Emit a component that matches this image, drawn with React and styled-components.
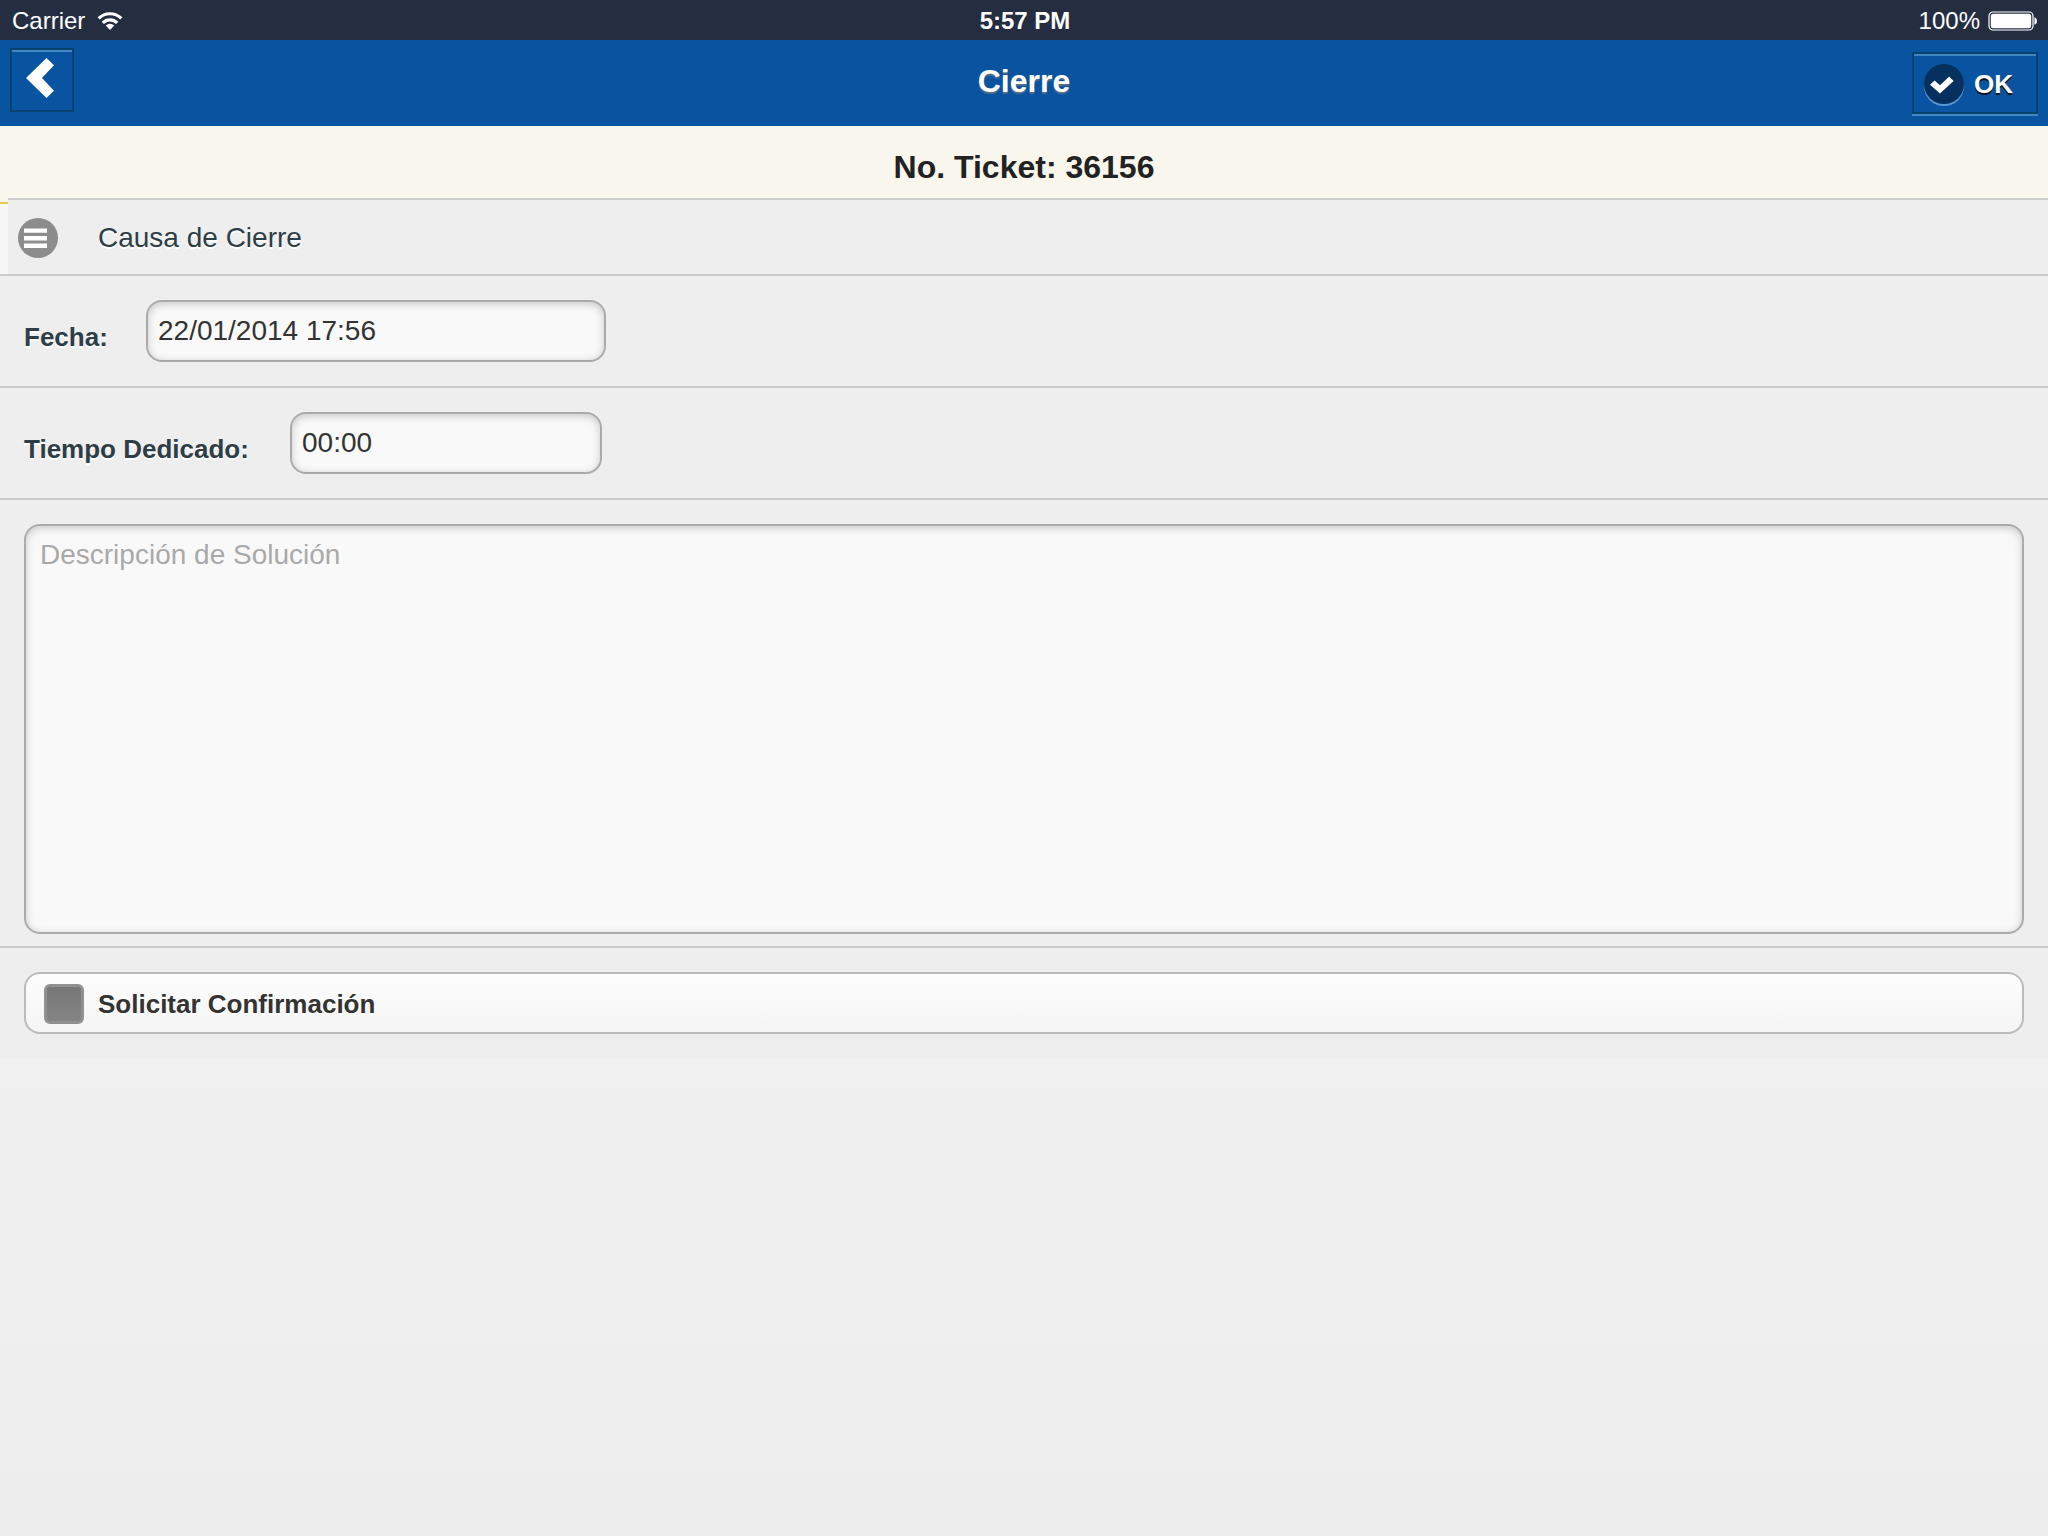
import React, { useState } from 'react';
import styled, { createGlobalStyle, css } from 'styled-components';

const GlobalStyle = createGlobalStyle`
	*, *::before, *::after {
		box-sizing: border-box;
	}

	body {
		margin: 0;
		font-family: 'Liberation Sans', Arial, sans-serif;
		color: #333;
	}

	button, input, textarea {
		margin: 0;
		font-family: inherit;
	}
`;

const StyledPage = styled.div`
	min-height: 100vh;
	background: linear-gradient(#f9f9f9, #ededed);
`;

const StyledStatusBar = styled.div`
	height: 40px;
	padding: 0 10px 0 12px;
	display: grid;
	grid-template-columns: 1fr auto 1fr;
	align-items: center;
	background-color: #252e41;
	color: #fff;
	font-size: 24px;
	line-height: 42px;
`;

const StyledStatusSide = styled.div`
	display: flex;
	align-items: center;
	justify-content: ${props => (props.$end ? 'flex-end' : 'flex-start')};
	gap: ${props => (props.$end ? '8px' : '12px')};
`;

const StyledClock = styled.span`
	font-weight: bold;
`;

const StyledHeader = styled.header`
	height: 86px;
	padding: 0 10px;
	display: grid;
	grid-template-columns: 1fr auto 1fr;
	background-color: #0854a1;
`;

const StyledTitle = styled.h1`
	margin: 0;
	font-size: 32px;
	line-height: 82px;
	color: #fff;
	text-shadow: 0 2px 1px #5a6f86;
`;

const headerButton = css`
	border: 2px solid #07426f;
	background: none;
	color: #fff;
	cursor: pointer;
`;

const StyledBackButton = styled.button`
	${headerButton}
	width: 64px;
	height: 64px;
	margin-top: 8px;
	padding: 0 4px 4px 0;
	display: flex;
	align-items: center;
	justify-content: center;
	box-shadow: inset 0 2px 0 #4484bf;
`;

const StyledOkButton = styled.button`
	${headerButton}
	width: 126px;
	height: 62px;
	margin-top: 12px;
	padding: 2px 10px 0;
	justify-self: end;
	display: flex;
	align-items: center;
	gap: 10px;
	font-size: 26px;
	line-height: 32px;
	font-weight: bold;
	text-shadow: 0 2px 0 #111;
	box-shadow: inset 0 2px 0 #4484bf, 0 2px 0 #4484bf;
`;

const StyledOkIcon = styled.span`
	width: 40px;
	height: 40px;
	border-radius: 50%;
	background-color: #06305e;
	box-shadow: 0 2px 0 #5b98d2;
`;

const StyledTicket = styled.h2`
	margin: 0;
	height: 78px;
	padding-top: 10px;
	border-bottom: 2px solid #e6c84f;
	background-color: #f9f6ed;
	color: #222;
	font-size: 32px;
	line-height: 62px;
	text-align: center;
`;

// sits over the bottom edge of the ticket banner, only its left end shows
const StyledCauseItem = styled.div`
	margin: -6px 0 0 8px;
	border-top: 2px solid #ccc;
	background-color: #eee;
`;

const StyledCauseButton = styled.button`
	width: 100%;
	height: 74px;
	padding: 2px 10px 0;
	display: flex;
	align-items: center;
	gap: 40px;
	border: 0;
	background: none;
	color: #2f3e46;
	font-size: 28px;
	line-height: 34px;
	text-align: left;
	text-shadow: 0 2px 0 #fff;
	cursor: pointer;
`;

const StyledRow = styled.div`
	padding: 24px 24px ${props => (props.$tight ? '12px' : '24px')};
	display: flex;
	align-items: center;
	border-top: 2px solid #ccc;
	background-color: #eee;
`;

const StyledLabel = styled.label`
	width: ${props => props.$width};
	padding-top: 12px;
	color: #2f3e46;
	font-size: 26px;
	line-height: 32px;
	font-weight: bold;
	text-shadow: 0 2px 0 #fff;
`;

const fieldBox = css`
	border: 2px solid #aaa;
	border-radius: 16px;
	background-color: #f9f9f9;
	box-shadow: inset 0 2px 8px rgba(0, 0, 0, 0.2);
	color: #333;
	font-size: 28px;
	outline: none;
`;

const StyledInput = styled.input`
	${fieldBox}
	width: ${props => props.$width};
	height: 62px;
	padding: 0 10px;
`;

const StyledTextarea = styled.textarea`
	${fieldBox}
	display: block;
	width: 100%;
	height: 410px;
	padding: 10px 14px;
	line-height: 38px;
	resize: none;

	&::placeholder {
		color: #a9a9a9;
		opacity: 1;
	}
`;

const StyledConfirm = styled.label`
	width: 100%;
	height: 62px;
	padding: 2px 18px 0;
	display: flex;
	align-items: center;
	gap: 14px;
	border: 2px solid #bbb;
	border-radius: 16px;
	background: linear-gradient(#fdfdfd, #f5f5f5);
	font-size: 26px;
	line-height: 32px;
	font-weight: bold;
	text-shadow: 0 2px 0 #fff;
	cursor: pointer;
`;

const StyledCheckbox = styled.input`
	appearance: none;
	width: 40px;
	height: 40px;
	margin: 0;
	border: 3px solid #919191;
	border-radius: 6px;
	background: ${props => (props.checked ? '#0854a1' : 'linear-gradient(#777, #848484)')};
`;

const WifiIcon = () => (
	<svg width="26" height="20" viewBox="0 0 26 20" fill="none" stroke="#fff" strokeWidth="3.2">
		<path d="M1.7 7.4a16 16 0 0 1 22.6 0" />
		<path d="M5.8 11.8a10.2 10.2 0 0 1 14.4 0" />
		<path d="M13 19l-4.3-4.4a6.1 6.1 0 0 1 8.6 0z" fill="#fff" stroke="none" />
	</svg>
);

const BatteryIcon = () => (
	<svg width="50" height="20" viewBox="0 0 50 20">
		<rect x="1" y="1" width="44" height="18" rx="4" fill="none" stroke="#fff" strokeWidth="1.2" />
		<rect x="2.8" y="2.8" width="40.4" height="14.4" rx="2.5" fill="#fff" />
		<path d="M46.4 6.2c3.4.8 3.4 6.8 0 7.6z" fill="#fff" />
	</svg>
);

const BackIcon = () => (
	<svg width="28" height="40" viewBox="0 0 28 40">
		<path d="M20.5 0L28 7.3 16 20l12 12.7-7.5 7.3L0 20z" fill="#fff" />
	</svg>
);

const CheckIcon = () => (
	<svg width="40" height="40" viewBox="0 0 40 40">
		<path d="M6 20.8l4.6-4.4 5.4 4.8 9.2-8.8 4.4 4.6L16 29.6z" fill="#fff" />
	</svg>
);

const ListIcon = () => (
	<svg width="40" height="40" viewBox="0 0 40 40">
		<circle cx="20" cy="20" r="20" fill="#8c8c8c" />
		<path d="M6 10.4h23v4.4H6zM6 18h23v4.4H6zM6 25.6h23V30H6z" fill="#fff" />
	</svg>
);

const App = () => {
	const [date, setDate] = useState('22/01/2014 17:56');
	const [time, setTime] = useState('00:00');
	const [solution, setSolution] = useState('');
	const [confirm, setConfirm] = useState(false);

	return (
		<>
			<GlobalStyle />
			<StyledPage>
				<StyledStatusBar>
					<StyledStatusSide>
						<span>Carrier</span>
						<WifiIcon />
					</StyledStatusSide>
					<StyledClock>5:57 PM</StyledClock>
					<StyledStatusSide $end>
						<span>100%</span>
						<BatteryIcon />
					</StyledStatusSide>
				</StyledStatusBar>
				<StyledHeader>
					<StyledBackButton type="button" aria-label="Atrás">
						<BackIcon />
					</StyledBackButton>
					<StyledTitle>Cierre</StyledTitle>
					<StyledOkButton type="button">
						<StyledOkIcon>
							<CheckIcon />
						</StyledOkIcon>
						OK
					</StyledOkButton>
				</StyledHeader>
				<StyledTicket>No. Ticket: 36156</StyledTicket>
				<StyledCauseItem>
					<StyledCauseButton type="button">
						<ListIcon />
						Causa de Cierre
					</StyledCauseButton>
				</StyledCauseItem>
				<form>
					<StyledRow>
						<StyledLabel htmlFor="fecha" $width="122px">Fecha:</StyledLabel>
						<StyledInput id="fecha" $width="460px" value={date} onChange={e => setDate(e.target.value)} />
					</StyledRow>
					<StyledRow>
						<StyledLabel htmlFor="tiempo" $width="266px">Tiempo Dedicado:</StyledLabel>
						<StyledInput id="tiempo" $width="312px" value={time} onChange={e => setTime(e.target.value)} />
					</StyledRow>
					<StyledRow $tight>
						<StyledTextarea
							aria-label="Descripción de Solución"
							placeholder="Descripción de Solución"
							value={solution}
							onChange={e => setSolution(e.target.value)}
						/>
					</StyledRow>
					<StyledRow>
						<StyledConfirm htmlFor="confirmar">
							<StyledCheckbox
								id="confirmar"
								type="checkbox"
								checked={confirm}
								onChange={e => setConfirm(e.target.checked)}
							/>
							Solicitar Confirmación
						</StyledConfirm>
					</StyledRow>
				</form>
			</StyledPage>
		</>
	);
};

export default App;
